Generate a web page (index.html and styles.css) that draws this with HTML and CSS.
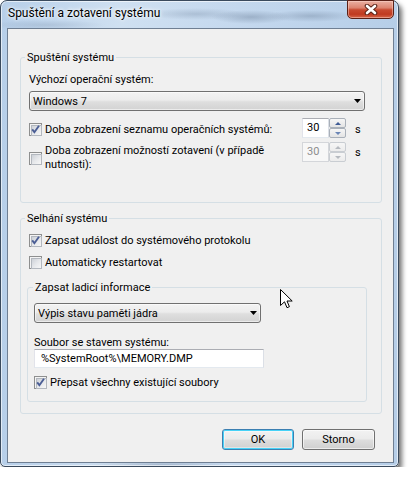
FILE: index.html
```html
<!DOCTYPE html>
<html lang="cs">
<head>
<meta charset="utf-8">
<title>Spuštění a zotavení systému</title>
<link rel="stylesheet" href="styles.css">
</head>
<body>
<div class="window">
  <div class="titlebar">
    <span class="title">Spuštění a zotavení systému</span>
    <button class="close" aria-label="Zavřít">
      <svg width="14" height="11" viewBox="0 0 14 11">
        <path d="M3 2 L11 9 M11 2 L3 9" stroke="#5b2418" stroke-width="4.6" stroke-linecap="round" fill="none"/>
        <path d="M3 2 L11 9 M11 2 L3 9" stroke="#ffffff" stroke-width="2.6" stroke-linecap="round" fill="none"/>
      </svg>
    </button>
  </div>
  <div class="client">
    <fieldset class="group g1">
      <legend>Spuštění systému</legend>
      <div class="label">Výchozí operační systém:</div>
      <div class="combo wide">
        <span class="ctext">Windows 7</span>
        <svg class="carrow" width="7" height="4" viewBox="0 0 7 4"><path d="M0 0 H7 L3.5 4 Z" fill="#000"/></svg>
      </div>
      <div class="row r1">
        <div class="chk">
          <span class="box"><svg viewBox="0 0 13 13" width="13" height="13"><path d="M3.2 6.4 L5.4 9.2 L10 2.8" stroke="#4b5e95" stroke-width="1.9" fill="none"/></svg></span>
          <span>Doba zobrazení seznamu operačních systémů:</span>
        </div>
        <div class="spin">
          <span class="field">30</span>
          <span class="btns"><span class="sb up"></span><span class="sb down"></span></span>
        </div>
        <span class="unit">s</span>
      </div>
      <div class="row r2">
        <div class="chk">
          <span class="box"></span>
          <span>Doba zobrazení možností zotavení (v případě<br>nutnosti):</span>
        </div>
        <div class="spin disabled">
          <span class="field">30</span>
          <span class="btns"><span class="sb up"></span><span class="sb down"></span></span>
        </div>
        <span class="unit">s</span>
      </div>
    </fieldset>

    <fieldset class="group g2">
      <legend>Selhání systému</legend>
      <div class="chk line first">
        <span class="box"><svg viewBox="0 0 13 13" width="13" height="13"><path d="M3.2 6.4 L5.4 9.2 L10 2.8" stroke="#4b5e95" stroke-width="1.9" fill="none"/></svg></span>
        <span>Zapsat událost do systémového protokolu</span>
      </div>
      <div class="chk line">
        <span class="box"></span>
        <span>Automaticky restartovat</span>
      </div>
      <fieldset class="group inner">
        <legend>Zapsat ladicí informace</legend>
        <div class="combo narrow">
          <span class="ctext">Výpis stavu paměti jádra</span>
          <svg class="carrow" width="7" height="4" viewBox="0 0 7 4"><path d="M0 0 H7 L3.5 4 Z" fill="#000"/></svg>
        </div>
        <div class="label lbl2">Soubor se stavem systému:</div>
        <div class="textbox">%SystemRoot%\MEMORY.DMP</div>
        <div class="chk line last">
          <span class="box"><svg viewBox="0 0 13 13" width="13" height="13"><path d="M3.2 6.4 L5.4 9.2 L10 2.8" stroke="#4b5e95" stroke-width="1.9" fill="none"/></svg></span>
          <span>Přepsat všechny existující soubory</span>
        </div>
      </fieldset>
    </fieldset>

    <div class="buttons">
      <button class="btn default">OK</button>
      <button class="btn">Storno</button>
    </div>
  </div>
</div>
<svg class="cursor" width="13" height="20" viewBox="0 0 13 20">
  <path d="M0.5 0.5 V16.5 L4.5 12.8 L7 18.7 L9.4 17.7 L7 12 H12.2 Z" fill="#fff" stroke="#000" stroke-linejoin="miter"/>
</svg>
</body>
</html>
```

FILE: styles.css
```css
* { box-sizing: border-box; }
html, body { margin: 0; padding: 0; background: #fff; }
body {
  position: relative;
  font-family: Roboto, "Liberation Sans", sans-serif;
  font-size: 11px;
  line-height: 15px;
  color: #000;
}

.window {
  position: relative;
  width: 399px;
  height: 467px;
  border: 1px solid #3a4a5d;
  border-radius: 7px 7px 5px 5px;
  padding: 0 4px 3px 6px;
  display: flex;
  flex-direction: column;
  background:
    radial-gradient(ellipse 40px 7px at 250px 16px, rgba(110,130,155,.45), transparent),
    radial-gradient(ellipse 50px 6px at 195px 13px, rgba(120,140,165,.35), transparent),
    radial-gradient(ellipse 45px 6px at 310px 15px, rgba(110,130,155,.4), transparent),
    radial-gradient(ellipse 60px 5px at 45px 24px, rgba(120,140,165,.25), transparent),
    radial-gradient(ellipse 70px 4px at 160px 464px, rgba(90,110,140,.35), transparent),
    linear-gradient(to right, #b7cfe9 0%, #cfe0f1 30%, #c4d8ee 60%, #b6cee8 100%);
  box-shadow: 3px 4px 5px rgba(0,0,0,.55), inset 0 0 0 1px rgba(255,255,255,.6);
}

.titlebar {
  flex: none;
  height: 27px;
  display: flex;
  justify-content: space-between;
  align-items: flex-start;
}
.title {
  padding: 5px 0 0 1px;
  font-size: 12px;
  line-height: 15px;
  color: #000;
  text-shadow: 0 0 5px #fff, 0 0 3px #fff;
}
.close {
  width: 47px;
  height: 19px;
  margin-top: -1px;
  padding: 0;
  border: 1px solid #5a2016;
  border-radius: 0 0 5px 5px;
  background: linear-gradient(#eab0a2 0%, #dc8470 40%, #c84a30 52%, #c03a20 78%, #d6674a 100%);
  box-shadow: inset 0 0 0 1px rgba(255,220,210,.45);
  display: flex;
  align-items: center;
  justify-content: center;
}

.client {
  flex: 1;
  border: 1px solid #6f7f93;
  background: #f0f0f0;
  padding: 21px 11px 12px 12px;
  display: flex;
  flex-direction: column;
}

.group {
  margin: 0;
  min-width: 0;
  border: 1px solid #d5dfe5;
  border-radius: 3px;
}
.group > legend {
  padding: 0 2px;
  line-height: 15px;
}
.g1 { padding: 7px 16px 30px 8px; }
.g1 > legend { margin-left: -4px; }
.g2 { margin-top: 8px; padding: 6px 14px 11px 6px; }
.g2 > legend { margin-left: -2px; }
.inner { margin-top: 10px; padding: 8px 6px 11px 6px; }
.inner > legend { margin-left: -1px; }

.label { height: 15px; }

.combo {
  height: 20px;
  display: flex;
  align-items: center;
  border: 1px solid #707070;
  border-radius: 3px;
  padding: 0 3px 0 3px;
  background: linear-gradient(#f3f3f3 0%, #ececec 45%, #dedede 55%, #d3d3d3 100%);
  box-shadow: inset 0 0 0 1px rgba(255,255,255,.55);
}
.combo .ctext { flex: 1; }
.combo.wide { margin-top: 4px; }
.combo.narrow { width: 227px; }

.row {
  display: grid;
  grid-template-columns: 1fr 44px 19px;
}
.r1 { margin-top: 7px; align-items: center; }
.r1 .chk { margin-top: 2px; }
.r2 { margin-top: 4px; align-items: start; }
.r2 .chk { margin-top: 2px; line-height: 14px; }
.unit { padding-left: 9px; }
.r1 .unit { margin-top: 2px; }
.r2 .unit { margin-top: 3px; }

.chk {
  display: flex;
  align-items: center;
  gap: 3px;
}
.chk.line { height: 16px; }
.g2 > .chk.line { padding-left: 2px; }
.g2 > .chk.first { margin-top: 0; }
.g2 > .chk.first + .chk.line { margin-top: 6px; }
.chk.last { margin-top: 6px; }

.box {
  position: relative;
  flex: none;
  width: 13px;
  height: 13px;
  border: 1px solid #8e8f8f;
  background: #f4f4f4;
}
.box::before {
  content: "";
  position: absolute;
  left: 1px;
  top: 1px;
  width: 9px;
  height: 9px;
  border: 1px solid #b3b8bf;
  background: linear-gradient(135deg, #cdd1d7 0%, #e6e8eb 50%, #f7f7f7 100%);
}
.box svg {
  position: absolute;
  left: -1px;
  top: -1px;
}

.spin {
  display: flex;
  height: 20px;
}
.spin .field {
  width: 27px;
  border: 1px solid;
  border-color: #abadb3 #dbdfe6 #e3e9ef #e2e3ea;
  background: #fff;
  padding: 1px 0 0 4px;
  line-height: 16px;
}
.spin .btns {
  width: 17px;
  display: flex;
  flex-direction: column;
}
.sb {
  flex: 1;
  border: 1px solid #a9b0b9;
  border-radius: 2px;
  background: linear-gradient(#f6f6f6, #e4e4e4);
  display: flex;
  align-items: center;
  justify-content: center;
}
.sb.up::after {
  content: "";
  border-left: 3px solid transparent;
  border-right: 3px solid transparent;
  border-bottom: 3px solid #3e5b94;
}
.sb.down::after {
  content: "";
  border-left: 3px solid transparent;
  border-right: 3px solid transparent;
  border-top: 3px solid #6b86b6;
}
.spin.disabled .field {
  color: #8d8d8d;
  border-color: #d4d6da;
  background: #f7f7f7;
}
.spin.disabled .sb {
  border-color: #c9cdd2;
  background: linear-gradient(#f6f6f6, #ececec);
}
.spin.disabled .sb.up::after { border-bottom-color: #b5b9bf; }
.spin.disabled .sb.down::after { border-top-color: #b5b9bf; }

.lbl2 { margin-top: 12px; height: 14px; }
.textbox {
  width: 230px;
  height: 19px;
  border: 1px solid;
  border-color: #abadb3 #dbdfe6 #e3e9ef #e2e3ea;
  background: #fff;
  padding: 1px 0 0 6px;
  line-height: 16px;
}

.buttons {
  margin-top: 15px;
  padding-right: 7px;
  display: flex;
  justify-content: flex-end;
  gap: 8px;
}
.btn {
  font: inherit;
  color: #000;
  height: 21px;
  width: 73px;
  padding: 0;
  border: 1px solid #707070;
  border-radius: 3px;
  background: linear-gradient(#f2f2f2 0%, #ebebeb 45%, #dddddd 55%, #cfcfcf 100%);
  box-shadow: inset 0 0 0 1px rgba(255,255,255,.6);
}
.btn.default {
  width: 72px;
  border-color: #3c7fb1;
  box-shadow: inset 0 0 0 1px #48d2f7, inset 0 0 0 2px rgba(255,255,255,.4);
}

.cursor {
  position: absolute;
  left: 280px;
  top: 289px;
}
```
